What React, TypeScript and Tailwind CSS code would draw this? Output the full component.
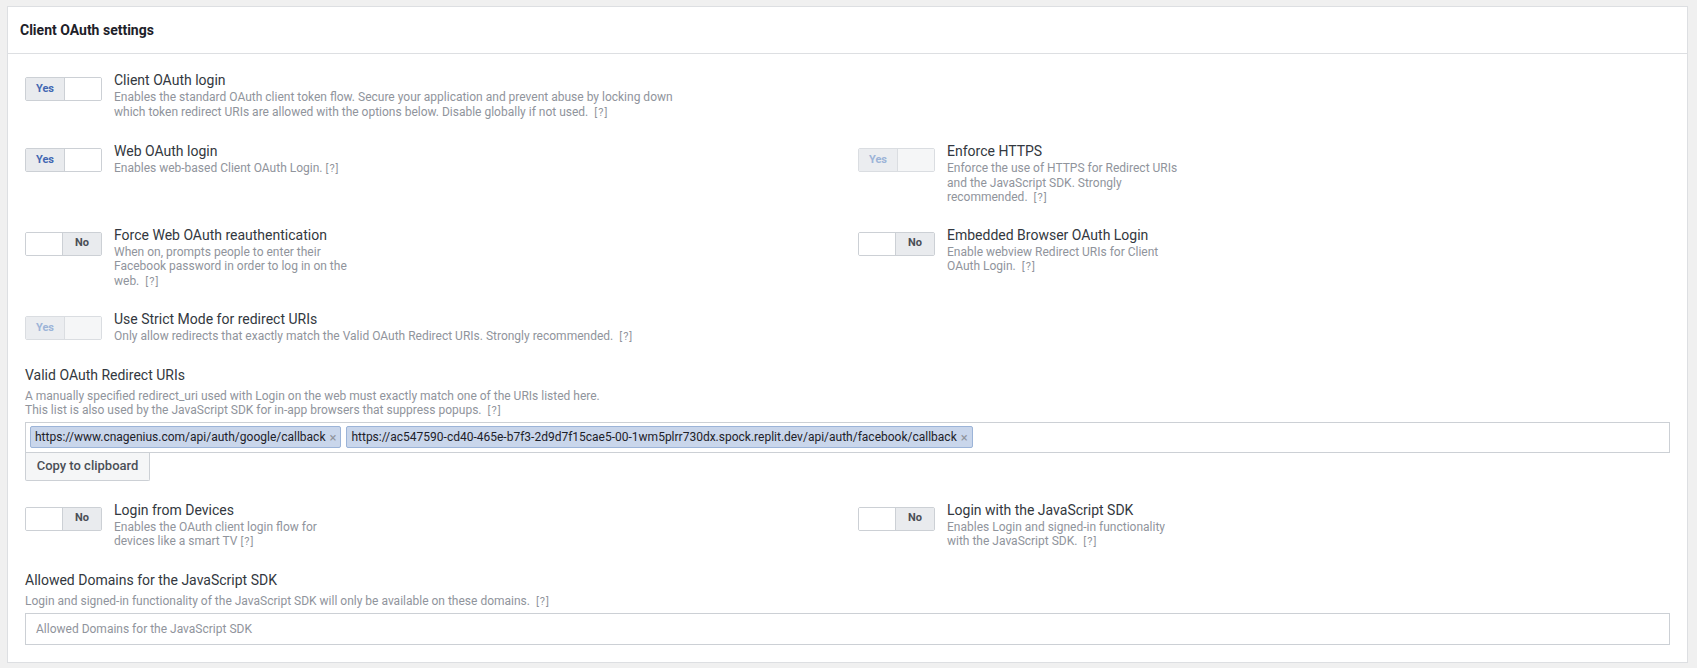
import React from "react";

type ToggleProps = { on: boolean; disabled?: boolean };

function Toggle({ on, disabled }: ToggleProps) {
  if (on) {
    return (
      <div
        className={
          "flex w-[77px] h-[24px] shrink-0 rounded-[2px] border overflow-hidden " +
          (disabled ? "border-[#dadde1]" : "border-[#ccd0d5]")
        }
      >
        <div
          className={
            "w-[39px] h-full flex items-center justify-center text-[11px] font-bold border-r " +
            (disabled
              ? "bg-[#ebedf0] text-[#9cb4d8] border-[#dadde1]"
              : "bg-[#e9ebee] text-[#4267b2] border-[#ccd0d5]")
          }
        >
          Yes
        </div>
        <div className={"flex-1 h-full " + (disabled ? "bg-[#f5f6f7]" : "bg-white")} />
      </div>
    );
  }
  return (
    <div className="flex w-[77px] h-[24px] shrink-0 rounded-[2px] border border-[#ccd0d5] overflow-hidden">
      <div className="w-[37px] h-full bg-white border-r border-[#ccd0d5]" />
      <div className="flex-1 h-full flex items-center justify-center text-[11px] font-bold bg-[#e9ebee] text-[#4b4f56]">
        No
      </div>
    </div>
  );
}

function Help({ gap = 2 }: { gap?: number }) {
  return (
    <span className={gap === 2 ? "ml-[6px] text-[11px] tracking-[1px]" : "ml-[3px] text-[11px] tracking-[1px]"}>[?]</span>
  );
}

type RowProps = {
  on: boolean;
  disabled?: boolean;
  label: string;
  desc: React.ReactNode;
  descWidth: string;
};

function ToggleRow({ on, disabled, label, desc, descWidth }: RowProps) {
  return (
    <div className="flex items-start">
      <div className="mt-[7px]">
        <Toggle on={on} disabled={disabled} />
      </div>
      <div className="ml-[12px]">
        <div className="text-[14px] leading-[20px] text-[#333840]">{label}</div>
        <div className={"text-[12px] leading-[14.5px] text-[#90949c] " + descWidth}>{desc}</div>
      </div>
    </div>
  );
}

function Tag({ text }: { text: string }) {
  return (
    <div className="flex items-center h-[22px] px-[4px] rounded-[2px] border border-[#9cb4d8] bg-[#c9d6eb] text-[12px] text-[#1d2129]">
      <span>{text}</span>
      <span className="ml-[4px] text-[#90949c] text-[13px] leading-none">×</span>
    </div>
  );
}

export default function App() {
  return (
    <div className="min-h-screen bg-[#f0f0f0] pt-[6px] pl-[7px] pr-[9px] pb-[6px] font-['Roboto',sans-serif]">
      <div className="bg-white border border-[#dddfe2]">
        <div className="h-[47px] border-b border-[#dddfe2] px-[12px] flex items-center text-[14px] font-bold text-[#1d2129]">
          Client OAuth settings
        </div>
        <div className="px-[17px] pt-[16px] pb-[17px]">
          <ToggleRow
            on
            label="Client OAuth login"
            descWidth="max-w-[580px]"
            desc={
              <>
                Enables the standard OAuth client token flow. Secure your application and prevent abuse by locking down
                which token redirect URIs are allowed with the options below. Disable globally if not used.
                <Help />
              </>
            }
          />

          <div className="grid grid-cols-2 gap-x-[21px] mt-[21px]">
            <ToggleRow
              on
              label="Web OAuth login"
              descWidth="max-w-[240px]"
              desc={
                <>
                  Enables web-based Client OAuth Login.
                  <Help gap={1} />
                </>
              }
            />
            <ToggleRow
              on
              disabled
              label="Enforce HTTPS"
              descWidth="max-w-[240px]"
              desc={
                <>
                  Enforce the use of HTTPS for Redirect URIs and the JavaScript SDK. Strongly recommended.
                  <Help />
                </>
              }
            />
          </div>

          <div className="grid grid-cols-2 gap-x-[21px] mt-[19px]">
            <ToggleRow
              on={false}
              label="Force Web OAuth reauthentication"
              descWidth="max-w-[240px]"
              desc={
                <>
                  When on, prompts people to enter their Facebook password in order to log in on the web.
                  <Help />
                </>
              }
            />
            <ToggleRow
              on={false}
              label="Embedded Browser OAuth Login"
              descWidth="max-w-[240px]"
              desc={
                <>
                  Enable webview Redirect URIs for Client OAuth Login.
                  <Help />
                </>
              }
            />
          </div>

          <div className="mt-[20px]">
            <ToggleRow
              on
              disabled
              label="Use Strict Mode for redirect URIs"
              descWidth="max-w-[700px]"
              desc={
                <>
                  Only allow redirects that exactly match the Valid OAuth Redirect URIs. Strongly recommended.
                  <Help />
                </>
              }
            />
          </div>

          <div className="mt-[20px]">
            <div className="text-[14px] leading-[20px] text-[#333840]">Valid OAuth Redirect URIs</div>
            <div className="mt-[4px] text-[12px] leading-[14.5px] text-[#90949c]">
              A manually specified redirect_uri used with Login on the web must exactly match one of the URIs listed here.
              <br />
              This list is also used by the JavaScript SDK for in-app browsers that suppress popups.
              <Help />
            </div>
            <div className="mt-[3px] h-[31px] border border-[#ccd0d5] flex items-center gap-[5px] px-[4px]">
              <Tag text="https://www.cnagenius.com/api/auth/google/callback" />
              <Tag text="https://ac547590-cd40-465e-b7f3-2d9d7f15cae5-00-1wm5plrr730dx.spock.replit.dev/api/auth/facebook/callback" />
            </div>
            <button className="h-[28px] w-[125px] border border-t-0 border-[#ccd0d5] bg-[#f5f6f7] rounded-b-[2px] text-[13px] font-medium text-[#4b4f56]">
              Copy to clipboard
            </button>
          </div>

          <div className="grid grid-cols-2 gap-x-[21px] mt-[19px]">
            <ToggleRow
              on={false}
              label="Login from Devices"
              descWidth="max-w-[240px]"
              desc={
                <>
                  Enables the OAuth client login flow for devices like a smart TV
                  <Help gap={1} />
                </>
              }
            />
            <ToggleRow
              on={false}
              label="Login with the JavaScript SDK"
              descWidth="max-w-[240px]"
              desc={
                <>
                  Enables Login and signed-in functionality with the JavaScript SDK.
                  <Help />
                </>
              }
            />
          </div>

          <div className="mt-[20px]">
            <div className="text-[14px] leading-[20px] text-[#333840]">Allowed Domains for the JavaScript SDK</div>
            <div className="mt-[4px] text-[12px] leading-[14.5px] text-[#90949c]">
              Login and signed-in functionality of the JavaScript SDK will only be available on these domains.
              <Help />
            </div>
            <div className="mt-[4px] h-[32px] border border-[#ccd0d5] flex items-center px-[10px] text-[12px] text-[#90949c]">
              Allowed Domains for the JavaScript SDK
            </div>
          </div>
        </div>
      </div>
    </div>
  );
}
